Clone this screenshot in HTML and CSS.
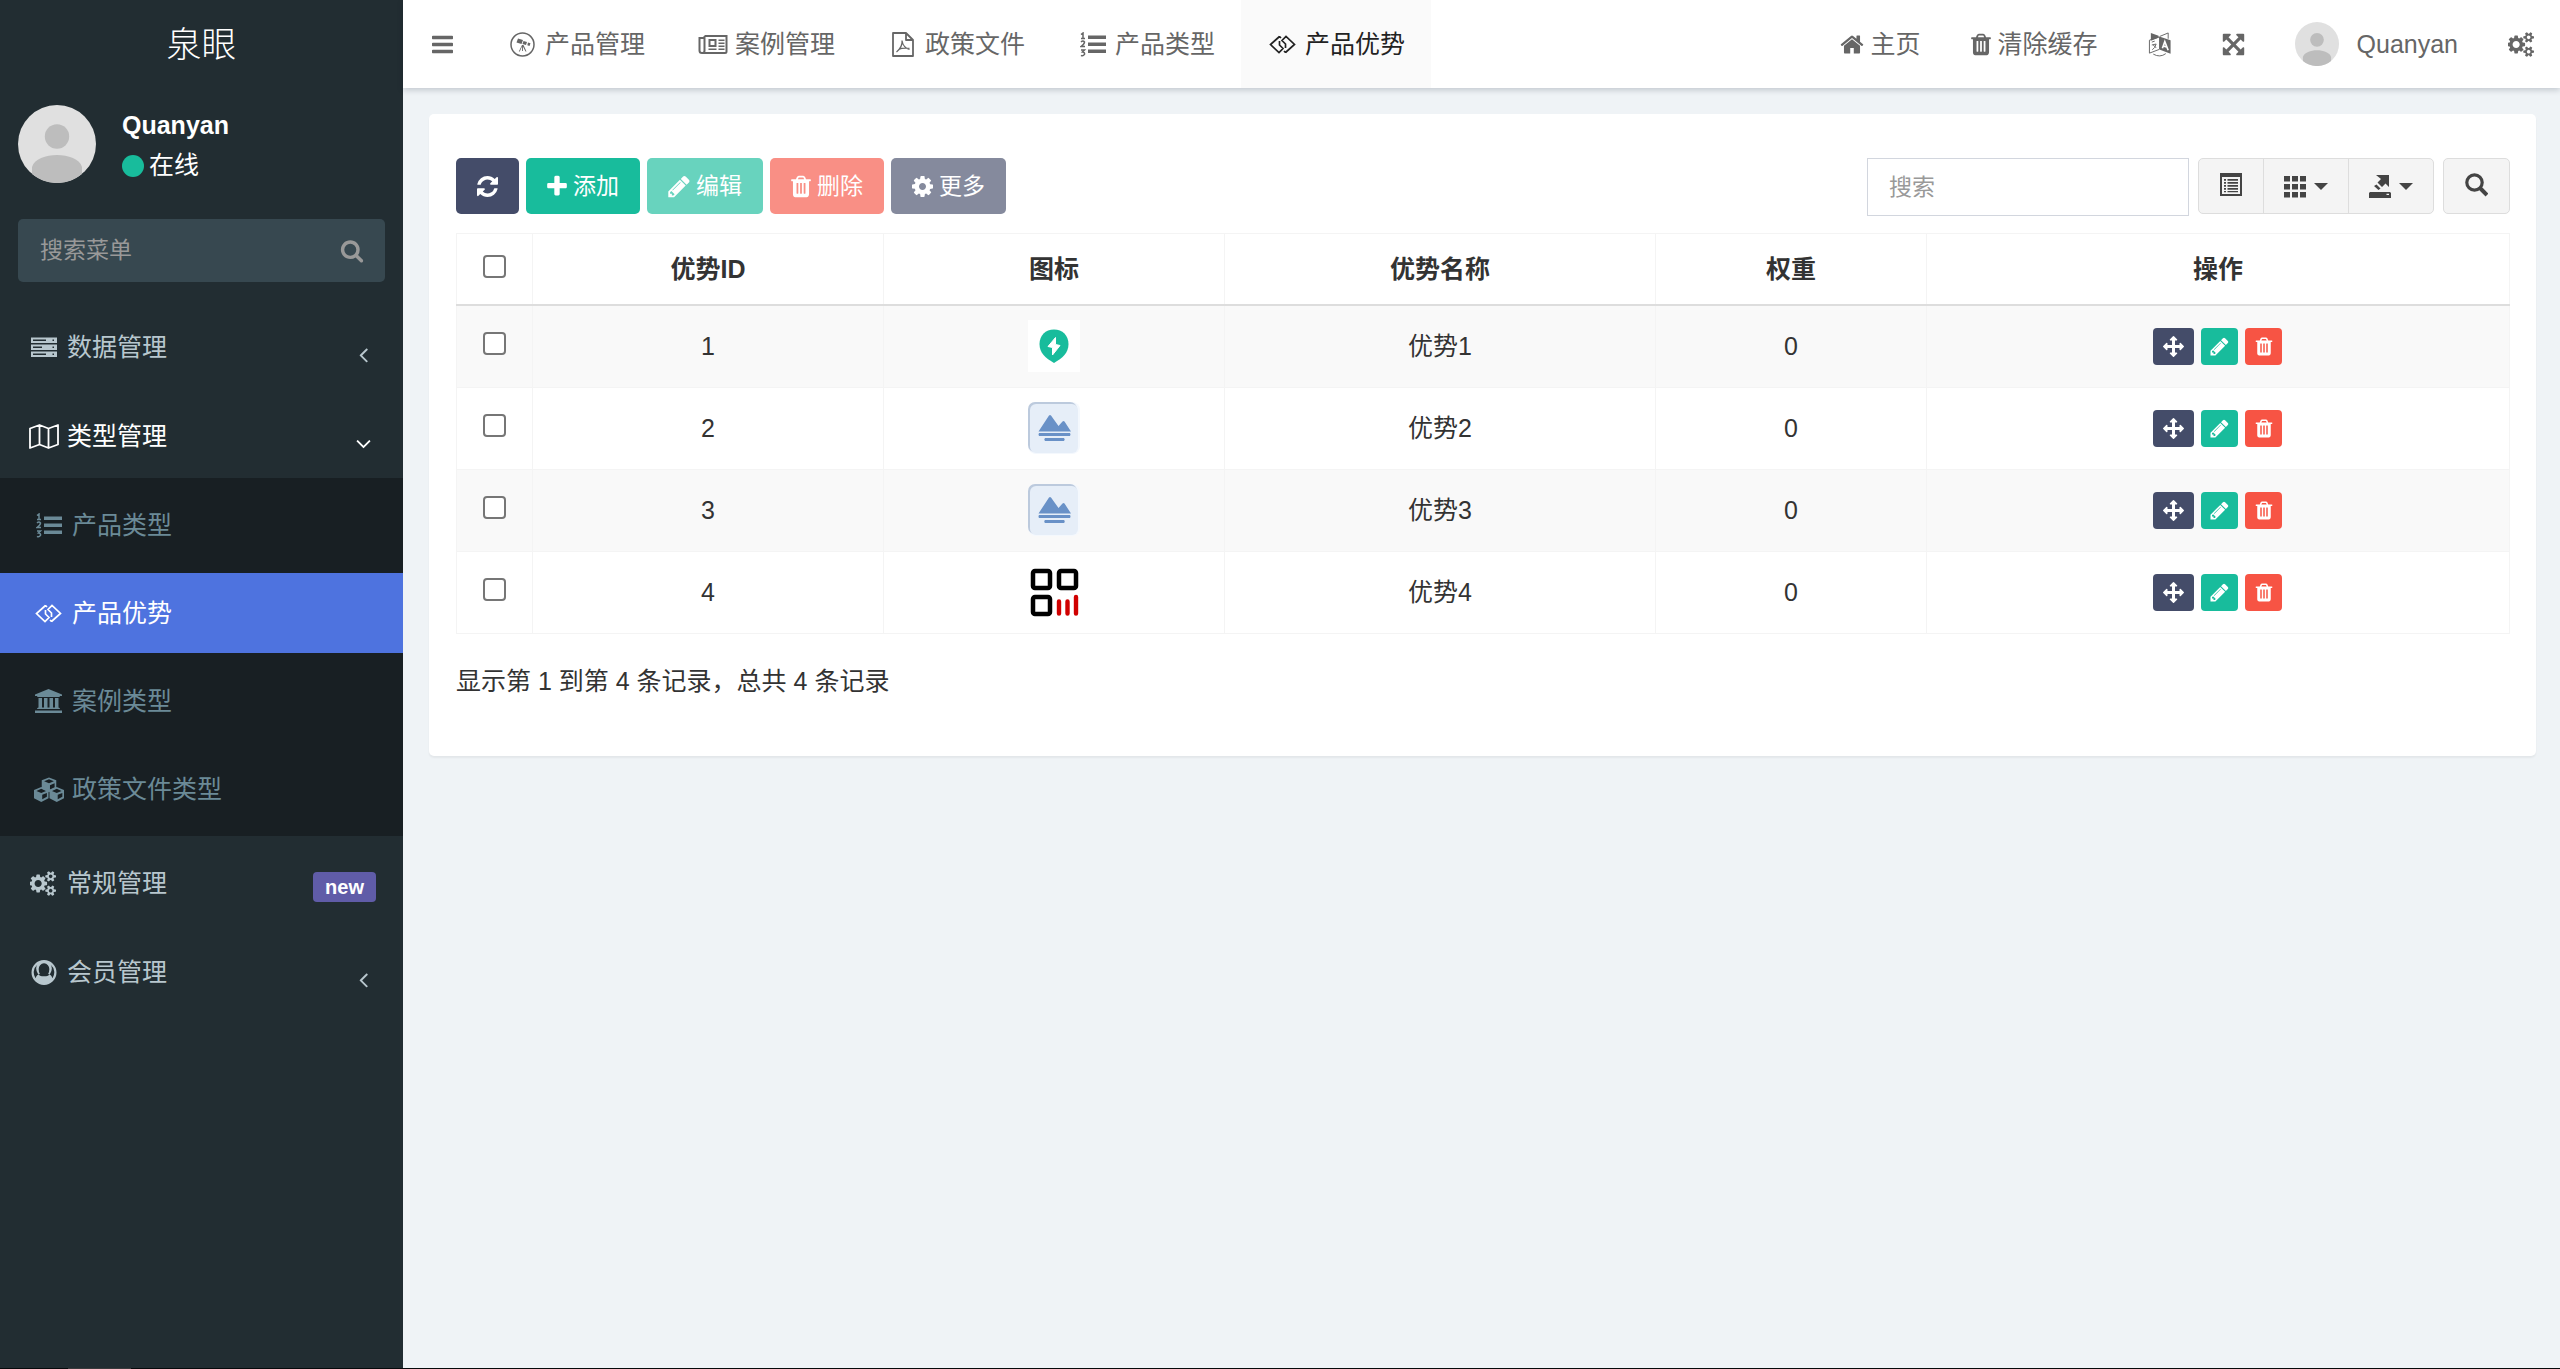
FILE: index.html
```html
<!DOCTYPE html>
<html lang="zh-CN">
<head>
<meta charset="utf-8">
<title>产品优势</title>
<link rel="stylesheet" href="styles.css">
</head>
<body>
<svg class="sprite" aria-hidden="true">
  <symbol id="bars" viewBox="128 0 1536 1792"><path d="M1664 1344v128q0 26-19 45t-45 19h-1408q-26 0-45-19t-19-45v-128q0-26 19-45t45-19h1408q26 0 45 19t19 45zm0-512v128q0 26-19 45t-45 19h-1408q-26 0-45-19t-19-45v-128q0-26 19-45t45-19h1408q26 0 45 19t19 45zm0-512v128q0 26-19 45t-45 19h-1408q-26 0-45-19t-19-45v-128q0-26 19-45t45-19h1408q26 0 45 19t19 45z"/></symbol>
  <symbol id="search" viewBox="0 0 1792 1792"><path d="M1216 832q0-185-131.500-316.500t-316.500-131.500-316.500 131.500-131.500 316.500 131.500 316.500 316.500 131.500 316.500-131.500 131.500-316.500zm512 832q0 52-38 90t-90 38q-54 0-90-38l-343-342q-179 124-399 124-143 0-273.500-55.500t-225-150-150-225-55.500-273.500 55.500-273.500 150-225 225-150 273.500-55.500 273.500 55.500 225 150 150 225 55.500 273.500q0 220-124 399l343 343q37 37 37 90z"/></symbol>
  <symbol id="refresh" viewBox="128 0 1536 1792"><path d="M1639 1056q0 5-1 7-64 268-268 434.500t-478 166.500q-146 0-282.500-55t-243.500-157l-129 129q-19 19-45 19t-45-19-19-45v-448q0-26 19-45t45-19h448q26 0 45 19t19 45-19 45l-137 137q71 66 161 102t187 36q134 0 250-65t186-179q11-17 53-117 8-23 30-23h192q13 0 22.500 9.500t9.500 22.500zm25-800v448q0 26-19 45t-45 19h-448q-26 0-45-19t-19-45 19-45l138-138q-148-137-349-137-134 0-250 65t-186 179q-11 17-53 117-8 23-30 23h-199q-13 0-22.500-9.500t-9.500-22.500v-7q65-268 270-434.500t480-166.500q146 0 284 55.500t245 156.500l130-129q19-19 45-19t45 19 19 45z"/></symbol>
  <symbol id="plus" viewBox="192 0 1408 1792"><path d="M1600 736v192q0 40-28 68t-68 28h-416v416q0 40-28 68t-68 28h-192q-40 0-68-28t-28-68v-416h-416q-40 0-68-28t-28-68v-192q0-40 28-68t68-28h416v-416q0-40 28-68t68-28h192q40 0 68 28t28 68v416h416q40 0 68 28t28 68z"/></symbol>
  <symbol id="pencil" viewBox="128 0 1536 1792"><path d="M491 1536l91-91-235-235-91 91v107h128v128h107zm523-928q0-22-22-22-10 0-17 7l-542 542q-7 7-7 17 0 22 22 22 10 0 17-7l542-542q7-7 7-17zm-54-192l416 416-832 832h-416v-416zm683 96q0 53-37 90l-166 166-416-416 166-165q36-38 90-38 53 0 91 38l235 234q37 39 37 91z"/></symbol>
  <symbol id="trash" viewBox="192 0 1408 1792"><path d="M704 1376v-704q0-14-9-23t-23-9h-64q-14 0-23 9t-9 23v704q0 14 9 23t23 9h64q14 0 23-9t9-23zm256 0v-704q0-14-9-23t-23-9h-64q-14 0-23 9t-9 23v704q0 14 9 23t23 9h64q14 0 23-9t9-23zm256 0v-704q0-14-9-23t-23-9h-64q-14 0-23 9t-9 23v704q0 14 9 23t23 9h64q14 0 23-9t9-23zm-544-992h448l-48-117q-7-9-17-11h-317q-10 2-17 11zm928 32v64q0 14-9 23t-23 9h-96v948q0 83-47 143.500t-113 60.500h-832q-66 0-113-58.500t-47-141.500v-952h-96q-14 0-23-9t-9-23v-64q0-14 9-23t23-9h309l70-167q15-37 54-63t79-26h320q40 0 79 26t54 63l70 167h309q14 0 23 9t9 23z"/></symbol>
  <symbol id="cog" viewBox="128 0 1536 1792"><path d="M1152 896q0-106-75-181t-181-75-181 75-75 181 75 181 181 75 181-75 75-181zm512-109v222q0 12-8 23t-20 13l-185 28q-19 54-39 91 35 50 107 138 10 12 10 25t-9 23q-27 37-99 108t-94 71q-12 0-26-9l-138-108q-44 23-91 38-16 136-29 186-7 28-36 28h-222q-14 0-24.500-8.500t-11.500-21.500l-28-184q-49-16-90-37l-141 107q-10 9-25 9-14 0-25-11-126-114-165-168-7-10-7-23 0-12 8-23 15-21 51-66.500t54-70.500q-27-50-41-99l-183-27q-13-2-21-12.500t-8-23.500v-222q0-12 8-23t19-13l186-28q14-46 39-92-40-57-107-138-10-12-10-24 0-10 9-23 26-36 98.500-107.500t94.500-71.500q13 0 26 10l138 107q44-23 91-38 16-136 29-186 7-28 36-28h222q14 0 24.500 8.500t11.500 21.500l28 184q49 16 90 37l142-107q9-9 24-9 13 0 25 10 129 119 165 170 7 8 7 22 0 12-8 23-15 21-51 66.500t-54 70.500q26 50 41 98l183 28q13 2 21 12.500t8 23.500z"/></symbol>
  <symbol id="cogs" viewBox="0 0 1920 1792"><path d="M832 896q0-106-75-181t-181-75-181 75-75 181 75 181 181 75 181-75 75-181zm768 512q0-52-38-90t-90-38-90 38-38 90q0 53 37.500 90.500t90.500 37.500 90.500-37.500 37.500-90.500zm0-1024q0-52-38-90t-90-38-90 38-38 90q0 53 37.500 90.500t90.500 37.500 90.500-37.500 37.500-90.500zm-384 421v185q0 10-7 19.500t-16 10.500l-155 24q-11 35-32 76 34 48 90 115 7 11 7 20 0 12-7 19-23 30-82.500 89.500t-78.500 59.500q-11 0-21-7l-115-90q-37 19-77 31-11 108-23 155-7 24-30 24h-186q-11 0-20-7.500t-10-17.500l-23-153q-34-10-75-31l-118 89q-7 7-20 7-11 0-21-8-144-133-144-160 0-9 7-19 10-14 41-53t47-61q-23-44-35-82l-152-24q-10-1-17-9.500t-7-19.500v-185q0-10 7-19.500t16-10.500l155-24q11-35 32-76-34-48-90-115-7-11-7-20 0-12 7-20 22-30 82-89t79-59q11 0 21 7l115 90q34-18 77-32 11-108 23-154 7-24 30-24h186q11 0 20 7.500t10 17.500l23 153q34 10 75 31l118-89q8-7 20-7 11 0 21 8 144 133 144 160 0 8-7 19-12 16-42 54t-45 60q23 48 34 82l152 23q10 2 17 10.500t7 19.500zm640 533v140q0 16-149 31-12 27-30 52 51 113 51 138 0 4-4 7-122 71-124 71-8 0-46-47t-52-68q-20 2-30 2t-30-2q-14 21-52 68t-46 47q-2 0-124-71-4-3-4-7 0-25 51-138-18-25-30-52-149-15-149-31v-140q0-16 149-31 13-29 30-52-51-113-51-138 0-4 4-7 4-2 35-20t59-34 30-16q8 0 46 46.500t52 67.500q20-2 30-2t30 2q51-71 92-112l6-2q4 0 124 70 4 3 4 7 0 25-51 138 17 23 30 52 149 15 149 31zm0-1024v140q0 16-149 31-12 27-30 52 51 113 51 138 0 4-4 7-122 71-124 71-8 0-46-47t-52-68q-20 2-30 2t-30-2q-14 21-52 68t-46 47q-2 0-124-71-4-3-4-7 0-25 51-138-18-25-30-52-149-15-149-31v-140q0-16 149-31 13-29 30-52-51-113-51-138 0-4 4-7 4-2 35-20t59-34 30-16q8 0 46 46.500t52 67.500q20-2 30-2t30 2q51-71 92-112l6-2q4 0 124 70 4 3 4 7 0 25-51 138 17 23 30 52 149 15 149 31z"/></symbol>
  <symbol id="home" viewBox="64 0 1664 1792"><path d="M1472 992v480q0 26-19 45t-45 19h-384v-384h-256v384h-384q-26 0-45-19t-19-45v-480q0-1 .5-3t.5-3l575-474 575 474q1 2 1 6zm223-69l-62 74q-8 9-21 11h-3q-13 0-21-7l-692-577-692 577q-12 8-24 7-13-2-21-11l-62-74q-8-10-7-23.500t11-21.500l719-599q32-26 76-26t76 26l244 204v-195q0-14 9-23t23-9h192q14 0 23 9t9 23v408l219 182q10 8 11 21.500t-7 23.500z"/></symbol>
  <symbol id="arrows" viewBox="0 0 1792 1792"><path d="M1792 896q0 26-19 45l-256 256q-19 19-45 19t-45-19-19-45v-128h-384v384h128q26 0 45 19t19 45-19 45l-256 256q-19 19-45 19t-45-19l-256-256q-19-19-19-45t19-45 45-19h128v-384h-384v128q0 26-19 45t-45 19-45-19l-256-256q-19-19-19-45t19-45l256-256q19-19 45-19t45 19 19 45v128h384v-384h-128q-26 0-45-19t-19-45 19-45l256-256q19-19 45-19t45 19l256 256q19 19 19 45t-19 45-45 19h-128v384h384v-128q0-26 19-45t45-19 45 19l256 256q19 19 19 45z"/></symbol>
  <symbol id="expand" viewBox="128 0 1536 1792"><path d="M1411 541l-355 355 355 355 144-144q29-31 70-14 39 17 39 59v448q0 26-19 45t-45 19h-448q-42 0-59-40-17-39 14-69l144-144-355-355-355 355 144 144q31 30 14 69-17 40-59 40h-448q-26 0-45-19t-19-45v-448q0-42 40-59 39-17 69 14l144 144 355-355-355-355-144 144q-19 19-45 19-12 0-24-5-40-17-40-59v-448q0-26 19-45t45-19h448q42 0 59 40 17 39-14 69l-144 144 355 355 355-355-144-144q-31-30-14-69 17-40 59-40h448q26 0 45 19t19 45v448q0 42-39 59-13 5-25 5-26 0-45-19z"/></symbol>
  <symbol id="angle-left" viewBox="0 0 1792 1792"><path d="M1203 544q0 13-10 23l-393 393 393 393q10 10 10 23t-10 23l-50 50q-10 10-23 10t-23-10l-466-466q-10-10-10-23t10-23l466-466q10-10 23-10t23 10l50 50q10 10 10 23z"/></symbol>
  <symbol id="angle-down" viewBox="0 0 1792 1792"><path d="M1395 736q0 13-10 23l-466 466q-10 10-23 10t-23-10l-466-466q-10-10-10-23t10-23l50-50q10-10 23-10t23 10l393 393 393-393q10-10 23-10t23 10l50 50q10 10 10 23z"/></symbol>
  <symbol id="telescope" viewBox="0 0 25 25"><circle cx="12.500" cy="12.500" r="11.500" fill="none" stroke="currentColor" stroke-width="1.500"/><path d="M8 6.500l5 1.500-1.500 4-5-1.600zM13.500 9l3.500 1-1 3-3.500-1zM18 10.500l2.500.8-1 2.600-2.200-.7zM12 13h1.500l3 6.500h-1l-2.600-5V19H12v-4.500L9.800 19.500h-1z"/></symbol>
  <symbol id="newspaper" viewBox="0 0 29 25"><path fill="none" stroke="currentColor" stroke-width="2" d="M6 4h22v15.500q0 1.500-1.500 1.500h-23Q1 21 1 18.500V6h4M6 4v14.500Q6 21 4 21M11 8h6v6h-6z"/><path d="M10 16.500h8V18h-8zM20 7.500h6V9h-6zM20 10.500h6V12h-6zM20 13.500h6V15h-6zM20 16.500h6V18h-6z"/></symbol>
  <symbol id="file-pdf" viewBox="0 0 22 25"><path fill="none" stroke="currentColor" stroke-width="1.800" stroke-linejoin="round" d="M1 1h13l7 7v16H1zM14 1v7h7"/><path fill="none" stroke="currentColor" stroke-width="1.200" d="M10 8.500q1 7 7.500 9M10 8.500q.8 6-5.500 11.500M6.500 17.500q4-2 11-1.200"/></symbol>
  <symbol id="list-ol" viewBox="0 0 26 25"><path d="M8 3.500h18v3.500H8zM8 10.500h18V14H8zM8 17.500h18V21H8z"/><path fill="none" stroke="currentColor" stroke-width="1.500" d="M1 2.500L3 1v5.500M1 6.500h4M1 10q2-2 3.500 0Q4.500 12 1 14.500h4M1 18h3.500l-2 2q2.500.2 2 2.300Q3 24.500 1 23.300"/></symbol>
  <symbol id="link-diamond" viewBox="0 0 27 25"><path fill="none" stroke="currentColor" stroke-width="1.700" d="M10.500 4.500L1.500 12.500l8.500 8 4-4-3.500-3.500 0-4M10.500 4.500L12 6M16.500 20.500l9-8-8.500-8-4 4 3.500 3.500 0 4M16.500 20.500L15 19"/></symbol>
  <symbol id="server" viewBox="0 0 26 25"><path fill-rule="evenodd" d="M0 2.500h26v5.500H0zM2 4.500V6h13V4.500zM21.500 4.500V6H23V4.500zM0 9.500h26V15H0zM2 11.500V13h9v-1.500zM21.500 11.500V13H23v-1.500zM0 16.500h26V22H0zM2 18.500V20h13v-1.500zM21.500 18.500V20H23v-1.500z"/></symbol>
  <symbol id="map" viewBox="0 0 30 25"><path fill="none" stroke="currentColor" stroke-width="1.800" stroke-linejoin="round" d="M1 4.500L10.500 1l9 3.500L29 1v19.500L19.500 24l-9-3.500L1 24zM10.500 1v19.500M19.500 4.500V24"/></symbol>
  <symbol id="bank" viewBox="0 0 27 25"><path d="M13.500 0L27 5.500V7H25q0 1-1 1H3Q2 8 2 7H0V5.500zM3.500 9H7v9.500h2V9h3.500v9.500h2V9H18v9.500h2V9h3.500v9.500q1.500 0 1.500 1.500H2q0-1.500 1.500-1.500zM0 21.500h27V24H0z"/></symbol>
  <symbol id="cubes" viewBox="0 0 31 25"><g id="cube"><path fill-rule="evenodd" d="M15.500 0L23 3v8.500l-7.500 3.800L8 11.500V3zM15.500 1.800L10.500 4l5 2 5-2zM16.500 8v4.500l4.800-2.400V6z"/></g><use href="#cube" x="-8" y="10"/><use href="#cube" x="8" y="10"/></symbol>
  <symbol id="user-circle" viewBox="0 0 26 26"><path fill-rule="evenodd" d="M13 0a13 13 0 1 1 0 26A13 13 0 0 1 13 0zM13 3.500a5.500 6 0 0 0-5.500 6.500q0 2.500 1.200 4.500Q5.500 15 4.200 19A10.700 10.700 0 0 1 6 4.900Q3.500 9 6.500 14 8 17 13 17t6.500-3q3-5 .5-9.100A10.700 10.700 0 0 1 21.800 19Q20.500 15 17.300 14.500q1.200-2 1.200-4.500A5.500 6 0 0 0 13 3.500z"/></symbol>
  <symbol id="language" viewBox="0 0 24 26"><path d="M2.500 1l8 3v2l-8 3zM12 5l11 3.500v14L12 18.500z"/><path fill="none" stroke="currentColor" d="M1 8.500L11.500 5v13L1 22zM12 4.500L20.500 1v6M5 23q7 4 13-.5M3.500 10.500l3-1M3.500 13.500l4.500-1q-1 4-4 6M5 13.500l3 3"/><path fill="none" stroke="#fff" stroke-width="1.700" d="M14.500 17l2.500-7 3.500 9M15.500 14.500l4 1.300"/></symbol>
  <symbol id="list-alt" viewBox="0 0 22 23"><path fill-rule="evenodd" d="M0 0h22v23H0zM2 4v17h18V4z"/><path d="M4 6h2v1.700H4zM7.500 6H18v1.700H7.500zM4 9h2v1.700H4zM7.500 9H18v1.700H7.500zM4 12h2v1.700H4zM7.500 12H18v1.700H7.500zM4 15h2v1.700H4zM7.500 15H18v1.700H7.500zM4 18h2v1.200H4zM7.500 18H18v1.200H7.500z"/></symbol>
  <symbol id="th" viewBox="0 0 22 23"><path d="M0 1h6v5.500H0zM8 1h6v5.500H8zM16 1h6v5.500h-6zM0 9h6v5.500H0zM8 9h6v5.500H8zM16 9h6v5.500h-6zM0 17h6v5.500H0zM8 17h6v5.500H8zM16 17h6v5.500h-6z"/></symbol>
  <symbol id="export" viewBox="0 0 22 23"><path fill-rule="evenodd" d="M1 17h20l1 1v5H0v-5zM17.500 18.700v1.300H20v-1.300zM7 0h13v12l-3.500-3.500-3.500 3.500-4.500-4.500L12 4zM7.500 9.500l4 4-2 1.500L5 11z"/></symbol>
  <symbol id="glass-search" viewBox="0 0 23 23"><circle cx="9.500" cy="9.500" r="7.700" fill="none" stroke="currentColor" stroke-width="3.200"/><path fill="none" stroke="currentColor" stroke-width="4" d="M15 15l7 7"/></symbol>
  <symbol id="avatar" viewBox="0 0 78 78"><circle cx="39" cy="39" r="39" fill="#e0e0e0"/><circle cx="39" cy="31.500" r="12.200" fill="#bdbdbd"/><path fill="#bdbdbd" d="M14 69V62C16 54 28 50 39 50s23 4 25 12v7A39 39 0 0 1 14 69z"/></symbol>
  <symbol id="pic-charge" viewBox="0 0 52 52"><path fill="#fff" d="M0 0h52v52H0z"/><path fill="#18bc9c" d="M26 9.500c8.500 0 14.500 6 14.500 14.500 0 9-6 14-14.500 19-8.500-5-14.500-10-14.500-19C11.500 15.500 17.500 9.500 26 9.500z"/><path fill="#fff" stroke="#fff" stroke-linejoin="round" d="M27.500 17.500L20 26.500l4.500 1V35L32 25.500l-4.500-1z"/></symbol>
  <symbol id="pic-hills" viewBox="0 0 52 52"><rect width="52" height="52" rx="8" fill="#f4f8fd"/><rect width="49" height="50" rx="7" fill="#bccadd"/><rect x="2" y="2" width="48" height="49" rx="6" fill="#e6eef8"/><path fill="#6991c7" d="M21 13.500q1-1 2 0l7.500 10.500 4-4.500q1.200-1 2 0L43 29.500H10.500zM11 31h31q1 1.500 0 3H11q-1-1.500 0-3zM17 36h19q1.500 1.500 0 3H17q-1.500-1.500 0-3z"/></symbol>
  <symbol id="pic-code" viewBox="0 0 52 52"><g fill="none" stroke="#000" stroke-width="4.500"><rect x="5" y="5" width="17" height="17" rx="2"/><rect x="31" y="5" width="17" height="17" rx="2"/><rect x="5" y="31" width="17" height="17" rx="2"/></g><path fill="none" stroke="#d00000" stroke-width="4.400" stroke-linecap="round" d="M31 35.500v12M39.500 35.500v12M48 31v16.500"/></symbol>
</svg>

<div class="app">
  <aside class="sidebar">
    <a class="logo" href="#">泉眼</a>
    <div class="user">
      <svg class="user-pic"><use href="#avatar"/></svg>
      <div class="user-info">
        <strong>Quanyan</strong>
        <a class="status" href="#"><span class="dot"></span>在线</a>
      </div>
    </div>
    <form class="menu-search">
      <input type="text" placeholder="搜索菜单" aria-label="搜索菜单">
      <button type="button" aria-label="搜索"><svg class="i i-24"><use href="#search"/></svg></button>
    </form>
    <nav>
      <ul class="menu">
        <li><a class="item" href="#"><span class="fw"><svg class="i i-26"><use href="#server"/></svg></span>数据管理<svg class="i i-25 caret"><use href="#angle-left"/></svg></a></li>
        <li>
          <a class="item open" href="#"><span class="fw"><svg class="i i-30"><use href="#map"/></svg></span>类型管理<svg class="i i-25 caret"><use href="#angle-down"/></svg></a>
          <ul class="submenu">
            <li><a class="item sub" href="#"><span class="fw"><svg class="i i-26"><use href="#list-ol"/></svg></span>产品类型</a></li>
            <li><a class="item sub current" href="#"><span class="fw"><svg class="i i-27"><use href="#link-diamond"/></svg></span>产品优势</a></li>
            <li><a class="item sub" href="#"><span class="fw"><svg class="i i-27"><use href="#bank"/></svg></span>案例类型</a></li>
            <li><a class="item sub" href="#"><span class="fw"><svg class="i i-30"><use href="#cubes"/></svg></span>政策文件类型</a></li>
          </ul>
        </li>
        <li><a class="item" href="#"><span class="fw"><svg class="i i-27"><use href="#cogs"/></svg></span>常规管理<span class="badge">new</span></a></li>
        <li><a class="item" href="#"><span class="fw"><svg class="i i-26"><use href="#user-circle"/></svg></span>会员管理<svg class="i i-25 caret"><use href="#angle-left"/></svg></a></li>
      </ul>
    </nav>
  </aside>

  <div class="main">
    <header class="topbar">
      <button class="toggle" type="button" aria-label="切换菜单"><svg class="i i-21"><use href="#bars"/></svg></button>
      <nav class="tabs">
        <a class="tab" href="#"><span class="fw"><svg class="i i-25"><use href="#telescope"/></svg></span>产品管理</a>
        <a class="tab" href="#"><span class="fw"><svg class="i i-30"><use href="#newspaper"/></svg></span>案例管理</a>
        <a class="tab" href="#"><span class="fw"><svg class="i i-24"><use href="#file-pdf"/></svg></span>政策文件</a>
        <a class="tab" href="#"><span class="fw"><svg class="i i-26"><use href="#list-ol"/></svg></span>产品类型</a>
        <a class="tab current" href="#"><span class="fw"><svg class="i i-27"><use href="#link-diamond"/></svg></span>产品优势</a>
      </nav>
      <nav class="tools">
        <a href="#"><svg class="i i-24"><use href="#home"/></svg>主页</a>
        <a href="#"><svg class="i i-20"><use href="#trash"/></svg>清除缓存</a>
        <a href="#" aria-label="语言"><svg class="i i-24"><use href="#language"/></svg></a>
        <a href="#" aria-label="全屏"><svg class="i i-23"><use href="#expand"/></svg></a>
        <a class="account" href="#"><svg class="account-pic"><use href="#avatar"/></svg>Quanyan</a>
        <a href="#" aria-label="设置"><svg class="i i-27"><use href="#cogs"/></svg></a>
      </nav>
    </header>

    <main class="content">
      <section class="panel">
        <div class="toolbar">
          <div class="actions">
            <button class="btn dark" type="button" aria-label="刷新"><svg class="i i-21"><use href="#refresh"/></svg></button>
            <button class="btn green" type="button"><svg class="i i-20"><use href="#plus"/></svg>添加</button>
            <button class="btn green off" type="button"><svg class="i i-22"><use href="#pencil"/></svg>编辑</button>
            <button class="btn red off" type="button"><svg class="i i-20"><use href="#trash"/></svg>删除</button>
            <button class="btn dark off" type="button"><svg class="i i-21"><use href="#cog"/></svg>更多</button>
          </div>
          <div class="filters">
            <input class="query" type="text" placeholder="搜索" aria-label="搜索">
            <div class="group">
              <button type="button" aria-label="切换"><svg class="i i-22"><use href="#list-alt"/></svg></button>
              <button type="button" aria-label="列"><svg class="i i-22"><use href="#th"/></svg><span class="arrow"></span></button>
              <button type="button" aria-label="导出数据"><svg class="i i-22"><use href="#export"/></svg><span class="arrow"></span></button>
            </div>
            <div class="group">
              <button type="button" aria-label="普通搜索"><svg class="i i-23"><use href="#glass-search"/></svg></button>
            </div>
          </div>
        </div>

        <table class="grid">
          <colgroup><col class="c-check"><col class="c-id"><col class="c-icon"><col class="c-name"><col class="c-weight"><col></colgroup>
          <thead>
            <tr><th><input type="checkbox" aria-label="全选"></th><th>优势ID</th><th>图标</th><th>优势名称</th><th>权重</th><th>操作</th></tr>
          </thead>
          <tbody>
            <tr>
              <td><input type="checkbox" aria-label="选择 1"></td><td>1</td><td><svg class="pic"><use href="#pic-charge"/></svg></td><td>优势1</td><td>0</td>
              <td><div class="ops"><button class="op dark" type="button" aria-label="拖动"><svg class="i i-21"><use href="#arrows"/></svg></button><button class="op green" type="button" aria-label="编辑"><svg class="i i-21"><use href="#pencil"/></svg></button><button class="op red" type="button" aria-label="删除"><svg class="i i-20"><use href="#trash"/></svg></button></div></td>
            </tr>
            <tr>
              <td><input type="checkbox" aria-label="选择 2"></td><td>2</td><td><svg class="pic"><use href="#pic-hills"/></svg></td><td>优势2</td><td>0</td>
              <td><div class="ops"><button class="op dark" type="button" aria-label="拖动"><svg class="i i-21"><use href="#arrows"/></svg></button><button class="op green" type="button" aria-label="编辑"><svg class="i i-21"><use href="#pencil"/></svg></button><button class="op red" type="button" aria-label="删除"><svg class="i i-20"><use href="#trash"/></svg></button></div></td>
            </tr>
            <tr>
              <td><input type="checkbox" aria-label="选择 3"></td><td>3</td><td><svg class="pic"><use href="#pic-hills"/></svg></td><td>优势3</td><td>0</td>
              <td><div class="ops"><button class="op dark" type="button" aria-label="拖动"><svg class="i i-21"><use href="#arrows"/></svg></button><button class="op green" type="button" aria-label="编辑"><svg class="i i-21"><use href="#pencil"/></svg></button><button class="op red" type="button" aria-label="删除"><svg class="i i-20"><use href="#trash"/></svg></button></div></td>
            </tr>
            <tr>
              <td><input type="checkbox" aria-label="选择 4"></td><td>4</td><td><svg class="pic"><use href="#pic-code"/></svg></td><td>优势4</td><td>0</td>
              <td><div class="ops"><button class="op dark" type="button" aria-label="拖动"><svg class="i i-21"><use href="#arrows"/></svg></button><button class="op green" type="button" aria-label="编辑"><svg class="i i-21"><use href="#pencil"/></svg></button><button class="op red" type="button" aria-label="删除"><svg class="i i-20"><use href="#trash"/></svg></button></div></td>
            </tr>
          </tbody>
        </table>
        <p class="summary">显示第 1 到第 4 条记录，总共 4 条记录</p>
      </section>
    </main>
  </div>
</div>
<div class="edge"></div>
</body>
</html>
```

FILE: styles.css
```css
*, *::before, *::after { box-sizing: border-box; }

body {
  margin: 0;
  min-height: 100vh;
  display: flex;
  flex-direction: column;
  background: #eff3f6;
  color: #333;
  font-family: "Liberation Sans", "Noto Sans CJK SC", sans-serif;
  font-size: 25px;
  line-height: 35px;
}

a { color: inherit; text-decoration: none; }
ul { margin: 0; padding: 0; list-style: none; }
button, input { font: inherit; color: inherit; margin: 0; }
button { border: 0; background: none; padding: 0; cursor: pointer; }

.sprite { position: absolute; width: 0; height: 0; }

/* icons */
.i { display: block; flex: none; fill: currentColor; height: 25px; }
.i-20 { width: 20px; }
.i-21 { width: 21px; }
.i-22 { width: 22px; }
.i-23 { width: 23px; }
.i-24 { width: 24px; }
.i-25 { width: 25px; }
.i-26 { width: 26px; }
.i-27 { width: 27px; }
.i-30 { width: 30px; }
.fw { display: flex; justify-content: center; flex: none; width: 31px; }

.app { display: flex; flex: 1; }
.edge {
  height: 1px;
  background: linear-gradient(90deg, #06090b 68px, #3a3a3c 68px, #3a3a3c 131px, #06090b 131px);
}

/* sidebar */
.sidebar { flex: none; width: 403px; background: #222d32; }
.logo {
  display: flex;
  align-items: center;
  justify-content: center;
  height: 88px;
  color: #fff;
  font-size: 35px;
  font-weight: 300;
}
.user { display: flex; gap: 26px; padding: 17px 18px 0; color: #fff; }
.user-pic { flex: none; width: 78px; height: 78px; }
.user-info { display: flex; flex-direction: column; gap: 5px; padding-top: 3px; }
.user-info strong { font-weight: 700; }
.status { display: flex; align-items: center; gap: 5px; }
.dot { width: 22px; height: 22px; border-radius: 50%; background: #18bc9c; }
.menu-search {
  display: flex;
  align-items: center;
  height: 63px;
  margin: 36px 18px 0;
  padding: 0 21px 0 22px;
  border-radius: 5px;
  background: #374850;
  color: #999;
}
.menu-search input {
  flex: 1;
  min-width: 0;
  padding: 0;
  border: 0;
  outline: 0;
  background: none;
  font-size: 23px;
}
::placeholder { color: #999; opacity: 1; }

.menu { display: flex; flex-direction: column; gap: 5px; margin-top: 23px; }
.item {
  display: flex;
  align-items: center;
  gap: 8px;
  height: 84px;
  padding: 0 27px 0 28px;
  color: #b8c7ce;
}
.item.open { color: #fff; }
.caret { margin: 14px 0 0 auto; }
.submenu { display: flex; flex-direction: column; gap: 8px; padding: 7px 0; background: #181f23; }
.item.sub { height: 80px; padding-left: 33px; color: #6b8a97; }
.item.sub.current { background: #4e73df; color: #fff; }
.badge {
  margin: 7px 0 0 auto;
  padding: 0 12px;
  border-radius: 4px;
  background: #605ca8;
  color: #fff;
  font-size: 20px;
  font-weight: 700;
  line-height: 30px;
}

/* top bar */
.main { display: flex; flex-direction: column; flex: 1; min-width: 0; }
.topbar {
  display: flex;
  height: 88px;
  background: #fff;
  color: #666;
  box-shadow: 0 2px 6px rgba(0, 21, 41, .2);
}
.toggle { display: flex; align-items: center; padding: 0 28px 0 29px; }
.tabs, .tools { display: flex; }
.tools { margin-left: auto; }
.tab { display: flex; align-items: center; gap: 7px; padding: 0 26px; }
.tab.current { background: #fafafa; color: #222; }
.tools a { display: flex; align-items: center; gap: 7px; padding: 0 25px; }
.tools .account { gap: 18px; }
.account-pic { width: 44px; height: 44px; }

/* panel */
.content { padding: 26px 24px 26px 26px; }
.panel {
  padding: 44px 26px 57px 27px;
  border-radius: 5px;
  background: #fff;
  box-shadow: 0 2px 2px rgba(0, 0, 0, .05);
}
.toolbar { display: flex; justify-content: space-between; height: 75px; }
.actions, .filters { display: flex; align-items: flex-start; gap: 7px; }
.filters { gap: 9px; }
.btn {
  display: flex;
  align-items: center;
  gap: 6px;
  height: 56px;
  padding: 0 21px;
  border-radius: 5px;
  color: #fff;
  font-size: 23px;
}
.dark { background: #444c69; }
.green { background: #18bc9c; }
.red { background: #f75444; }
.off { opacity: .65; }
.query {
  width: 322px;
  height: 58px;
  padding: 0 21px;
  border: 1px solid #d2d6de;
  background: #fff;
  font-size: 23px;
}
.group {
  display: flex;
  height: 56px;
  border: 1px solid #ddd;
  border-radius: 5px;
  background: #f4f4f4;
  color: #444;
}
.group button { display: flex; align-items: center; gap: 8px; padding: 0 21px 4px; }
.group button + button { padding: 0 20px; border-left: 1px solid #ddd; }
.arrow { border: 7px solid transparent; border-top-color: #444; border-bottom: 0; }

.grid { width: 100%; table-layout: fixed; border-collapse: collapse; text-align: center; }
.c-check { width: 76px; }
.c-id { width: 17.1%; }
.c-icon { width: 16.6%; }
.c-name { width: 21%; }
.c-weight { width: 13.2%; }
.grid th, .grid td { padding: 14px; border: 1px solid #f4f4f4; }
.grid th { padding: 18px 14px 17px; border-bottom: 2px solid #ddd; font-weight: 700; }
.grid td { height: 82px; }
.grid tbody tr:nth-child(odd) { background: #f9f9f9; }
.grid input {
  display: block;
  width: 23px;
  height: 23px;
  margin: 0 auto 6px;
  appearance: none;
  border: 2px solid #767676;
  border-radius: 4px;
  background: #fff;
}
.grid input:checked { background: #4e73df; }
.pic { display: block; width: 52px; height: 52px; margin: 0 auto; }
.ops { display: flex; justify-content: center; gap: 7px; }
.op { display: flex; align-items: center; justify-content: center; width: 37px; height: 37px; border-radius: 4px; color: #fff; }
.op.dark { width: 41px; }
.op .i { height: 21px; }
.summary { margin: 30px 0 0; }
```
